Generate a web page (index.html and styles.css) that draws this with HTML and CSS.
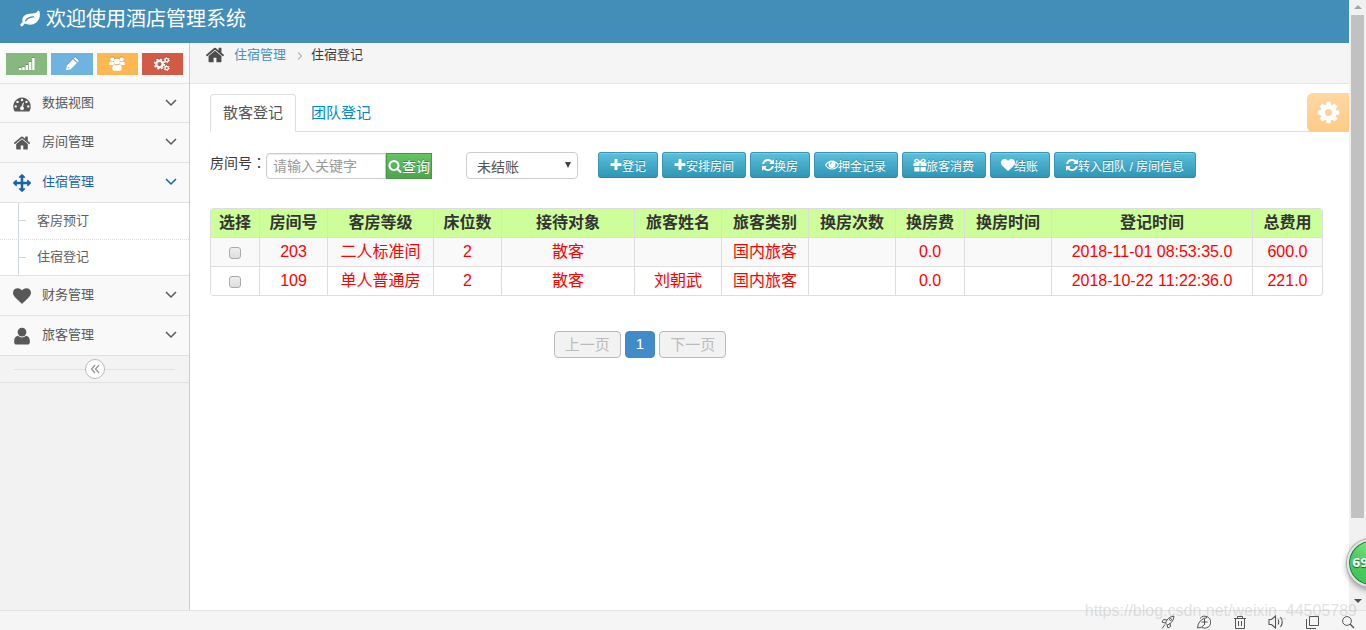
FILE: index.html
```html
<!DOCTYPE html>
<html lang="zh-CN">
<head>
<meta charset="utf-8">
<title>酒店管理系统</title>
<link rel="stylesheet" href="styles.css">
</head>
<body>
<svg class="sprite" aria-hidden="true">
  <symbol id="plus" viewBox="0 0 1792 1792"><path d="M1600 736v192q0 40-28 68t-68 28h-416v416q0 40-28 68t-68 28h-192q-40 0-68-28t-28-68v-416h-416q-40 0-68-28t-28-68v-192q0-40 28-68t68-28h416v-416q0-40 28-68t68-28h192q40 0 68 28t28 68v416h416q40 0 68 28t28 68z"/></symbol>
  <symbol id="search" viewBox="0 0 1792 1792"><path d="M1216 832q0-185-131.500-316.500t-316.500-131.500-316.500 131.500-131.500 316.500 131.500 316.500 316.500 131.500 316.500-131.500 131.500-316.500zm512 832q0 52-38 90t-90 38q-54 0-90-38l-343-342q-179 124-399 124-143 0-273.500-55.500t-225-150-150-225-55.500-273.500 55.500-273.500 150-225 225-150 273.500-55.500 273.500 55.500 225 150 150 225 55.500 273.500q0 220-124 399l343 343q37 37 37 90z"/></symbol>
  <symbol id="home" viewBox="0 0 1792 1792"><path d="M1472 992v480q0 26-19 45t-45 19h-384v-384h-256v384h-384q-26 0-45-19t-19-45v-480q0-1 .5-3t.5-3l575-474 575 474q1 2 1 6zm223-69l-62 74q-8 9-21 11h-3q-13 0-21-7l-692-577-692 577q-12 8-24 7-13-2-21-11l-62-74q-8-10-7-23.500t11-21.500l719-599q32-26 76-26t76 26l244 204v-195q0-14 9-23t23-9h192q14 0 23 9t9 23v408l219 182q10 8 11 21.500t-7 23.500z"/></symbol>
  <symbol id="heart" viewBox="0 0 1792 1792"><path d="M896 1664q-26 0-44-18l-624-602q-10-8-27.500-26t-55.500-65.500-68-97.500-53.500-121-23.500-138q0-220 127-344t351-124q62 0 126.500 21.500t120 58 95.500 68.500 76 68q36-36 76-68t95.500-68.500 120-58 126.500-21.500q224 0 351 124t127 344q0 221-229 450l-623 600q-18 18-44 18z"/></symbol>
  <symbol id="move" viewBox="0 0 1792 1792"><path d="M1792 896q0 26-19 45l-256 256q-19 19-45 19t-45-19-19-45v-128h-384v384h128q26 0 45 19t19 45-19 45l-256 256q-19 19-45 19t-45-19l-256-256q-19-19-19-45t19-45 45-19h128v-384h-384v128q0 26-19 45t-45 19-45-19l-256-256q-19-19-19-45t19-45l256-256q19-19 45-19t45 19 19 45v128h384v-384h-128q-26 0-45-19t-19-45 19-45l256-256q19-19 45-19t45 19l256 256q19 19 19 45t-19 45-45 19h-128v384h384v-128q0-26 19-45t45-19 45 19l256 256q19 19 19 45z"/></symbol>
  <symbol id="refresh" viewBox="0 0 1792 1792"><path d="M1639 1056q0 5-1 7-64 268-268 434.500t-478 166.500q-146 0-282.500-55t-243.500-157l-129 129q-19 19-45 19t-45-19-19-45v-448q0-26 19-45t45-19h448q26 0 45 19t19 45-19 45l-137 137q71 66 161 102t187 36q134 0 250-65t186-179q11-17 53-117 8-23 30-23h192q13 0 22.500 9.500t9.500 22.500zm25-800v448q0 26-19 45t-45 19h-448q-26 0-45-19t-19-45 19-45l138-138q-148-137-349-137-134 0-250 65t-186 179q-11 17-53 117-8 23-30 23h-199q-13 0-22.500-9.500t-9.500-22.500v-7q65-268 270-434.500t480-166.500q146 0 284 55.500t245 156.500l130-129q19-19 45-19t45 19 19 45z"/></symbol>
  <symbol id="cog" viewBox="0 0 1792 1792"><path d="M1152 896q0-106-75-181t-181-75-181 75-75 181 75 181 181 75 181-75 75-181zm512-109v222q0 12-8 23t-20 13l-185 28q-19 54-39 91 35 50 107 138 10 12 10 25t-9 23q-27 37-99 108t-94 71q-12 0-26-9l-138-108q-44 23-91 38-16 136-29 186-7 28-36 28h-222q-14 0-24.500-8.500t-11.500-21.500l-28-184q-49-16-90-37l-141 107q-10 9-25 9-14 0-25-11-126-114-165-168-7-10-7-23 0-12 8-23 15-21 51-66.500t54-70.500q-27-50-41-99l-183-27q-13-2-21-12.500t-8-23.500v-222q0-12 8-23t19-13l186-28q14-46 39-92-40-57-107-138-10-12-10-24 0-10 9-23 26-36 98.500-107.500t94.500-71.500q13 0 26 10l138 107q44-23 91-38 16-136 29-186 7-28 36-28h222q14 0 24.500 8.500t11.500 21.500l28 184q49 16 90 37l142-107q9-9 24-9 13 0 25 10 129 119 165 170 7 8 7 22 0 12-8 23-15 21-51 66.500t-54 70.500q26 50 41 98l183 28q13 2 21 12.500t8 23.500z"/></symbol>
  <symbol id="cogs" viewBox="0 0 16 14"><g fill="none" stroke="currentColor"><circle cx="5.500" cy="7" r="3.200" stroke-width="2.400"/><circle cx="5.500" cy="7" r="4.800" stroke-width="1.600" stroke-dasharray="2 1.770"/><circle cx="12.700" cy="3" r="1.700" stroke-width="1.300"/><circle cx="12.700" cy="3" r="2.600" stroke-width="1" stroke-dasharray="1.300 1.420"/><circle cx="12.700" cy="11" r="1.700" stroke-width="1.300"/><circle cx="12.700" cy="11" r="2.600" stroke-width="1" stroke-dasharray="1.300 1.420"/></g></symbol>
  <symbol id="signal" viewBox="0 0 16 14"><path d="M0 11h2.400v2H0zM3.300 10h2.400v3H3.300zM6.600 8H9v5H6.600zM9.900 5h2.400v8H9.900zM13.200 1h2.400v12h-2.400z"/></symbol>
  <symbol id="pencil" viewBox="0 0 14 14"><path fill-rule="evenodd" d="M1 13.200l.8-4.800L8 2.100l3.900 3.900-6.200 6.200zm1.700-1.700l1.500-.4-1.100-1.100zM8.700 1.400l.7-.7q.8-.7 1.600 0l2.300 2.300q.7.800 0 1.600l-.7.700z"/></symbol>
  <symbol id="group" viewBox="0 0 16 14"><circle cx="8" cy="4.500" r="3"/><circle cx="3.300" cy="2.300" r="2.100"/><circle cx="12.700" cy="2.300" r="2.100"/><path d="M.2 7.500Q0 4.200 1.600 4.200q1.700 1.100 3.100.2Q4.600 6 5.800 7 4.500 7 3.800 8H1.200q-.8 0-1-.5zM15.800 7.500q.2-3.300-1.400-3.300-1.700 1.100-3.100.2.100 1.600-1.100 2.600 1.300 0 2 1h2.600q.8 0 1-.5zM5.500 7.200q2.500 1.900 5 0 2.300.3 2.300 4.500 0 2.100-1.900 2.100H5.100q-1.900 0-1.900-2.100 0-4.200 2.300-4.500z"/></symbol>
  <symbol id="dashboard" viewBox="0 0 18 15"><path fill-rule="evenodd" d="M9 1a9 9 0 0 1 7.600 13.400q-.3.600-.9.600H2.300q-.6 0-.9-.6A9 9 0 0 1 9 1zM9 2.300a1.200 1.200 0 1 0 0 2.400 1.200 1.200 0 0 0 0-2.400zM4.500 4.200a1.200 1.200 0 1 0 0 2.400 1.200 1.200 0 0 0 0-2.400zm9 0a1.200 1.200 0 1 0 0 2.400 1.200 1.200 0 0 0 0-2.400zM2.700 8.700a1.200 1.200 0 1 0 0 2.400 1.200 1.200 0 0 0 0-2.400zm12.600 0a1.200 1.200 0 1 0 0 2.400 1.200 1.200 0 0 0 0-2.400zM10 6L8.600 9.700Q7 10 7 11.800 7.100 13.700 9 13.700t2-1.900q0-1.100-1-1.800L11 6.300z"/></symbol>
  <symbol id="user" viewBox="0 0 16 16"><circle cx="8" cy="4.500" r="3.900"/><path d="M4.300 7.800Q8 11 11.700 7.800 15 8.500 15 13q0 2.600-2.300 2.600H3.300Q1 15.600 1 13q0-4.500 3.300-5.200z"/></symbol>
  <symbol id="leaf" viewBox="0 0 20 17"><path fill-rule="evenodd" d="M18.600.6q.9 0 1.200 2.600.6 5.600-3.400 9.200-3.500 2.900-8.200 2.200-2-.6-3.400-1.100-1 1-2 2.600-.6.700-1.500.1-1.300-.9-1-1.700.4-.9 2.200-2.300Q1.300 6.400 7 4.300q2-.7 5.500-.9 3.600-.2 4.900-2 .6-.8 1.200-.8zM13.700 6.300Q8 6.200 5 10.500q-.3.800.4.900.5 0 .9-.5 3-3.300 7.400-3.300.7-.1.700-.7t-.7-.6z"/></symbol>
  <symbol id="eye" viewBox="0 0 14 12"><path fill-rule="evenodd" d="M7 1.500q4.400 0 7 4.500-2.600 4.500-7 4.500T0 6q2.600-4.500 7-4.500zM4.100 3.400Q2.200 4.400 1.200 6q2.200 3.400 5.800 3.400T12.800 6q-1-1.600-2.900-2.600.6.900.6 2a3.500 3.500 0 0 1-7 0q0-1.100.6-2zM7 3Q4.900 3.100 4.800 5.200q0 .4.400.4t.4-.4q0-1.300 1.400-1.400.4 0 .4-.4T7 3z"/></symbol>
  <symbol id="gift" viewBox="0 0 14 14"><path d="M.5 5h6v3h-6zM7.500 5h6v3h-6zM1.300 9h5.200v4.500H1.300zM7.500 9h5.200v4.500H7.500z"/><path d="M7 4.500Q5 .8 3.200 1.300 1.200 2 2.300 4q.4.600 4.700.5Q9 .8 10.800 1.300q2 .7.900 2.700-.4.600-4.700.5z" fill="none" stroke="currentColor" stroke-width="1.400"/></symbol>
  <symbol id="down" viewBox="0 0 12 8"><path d="M1 1l5 5 5-5" fill="none" stroke="currentColor" stroke-width="1.500"/></symbol>
  <symbol id="right" viewBox="0 0 6 8"><path d="M1 .5L4.500 4 1 7.500" fill="none" stroke="currentColor" stroke-width="1.200"/></symbol>
  <symbol id="double-left" viewBox="0 0 10 10"><path d="M5 1L1.500 5 5 9M9 1L5.500 5 9 9" fill="none" stroke="currentColor" stroke-width="1.300"/></symbol>
  <symbol id="tri-up" viewBox="0 0 8 4"><path d="M0 4l4-4 4 4z"/></symbol>
  <symbol id="tri-down" viewBox="0 0 8 4"><path d="M0 0l4 4 4-4z"/></symbol>
  <symbol id="caret" viewBox="0 0 6 6"><path d="M0 0h6L3 6z"/></symbol>
  <symbol id="rocket" viewBox="0 0 14 14"><g fill="none" stroke="currentColor"><path d="M4.500 8Q6.500 2 13 1q-.5 6.500-6.500 9zM6 5L2.500 4.500 1 7l3.500 1M9 8l.5 3.500L7 13l-1-3M4 9.500l-3 4"/><circle cx="9.500" cy="4.500" r="1"/></g></symbol>
  <symbol id="boost" viewBox="0 0 14 14"><path d="M3 3.500A6 6 0 1 1 5 12.500M.5 13Q1 4.500 10 2.500M.5 13q4.500 0 6.500-3M7.500 4v6M4.500 7h6" fill="none" stroke="currentColor"/></symbol>
  <symbol id="trash" viewBox="0 0 14 14"><path d="M1 3.500h12M4.500 3.500v-2h5v2M2.500 3.500v10h9v-10M5.500 6v5M8.500 6v5" fill="none" stroke="currentColor"/></symbol>
  <symbol id="sound" viewBox="0 0 16 14"><path d="M1 4.500h2.500L7.500 1v12l-4-3.500H1zM10 4.500q1.500 2.500 0 5M12.500 2q3.500 5 0 10" fill="none" stroke="currentColor" stroke-width="1.100"/></symbol>
  <symbol id="windows" viewBox="0 0 14 14"><path d="M4.500 1.500h9v9h-9zM1.500 4v9.500H11" fill="none" stroke="currentColor"/></symbol>
  <symbol id="zoom" viewBox="0 0 14 14"><path d="M9 9l4 4" fill="none" stroke="currentColor" stroke-width="1.400"/><circle cx="6" cy="6" r="4.400" fill="none" stroke="currentColor"/></symbol>
</svg>

<div class="window">
  <div class="page">
    <header class="topbar">
      <svg class="leaf"><use href="#leaf"/></svg>
      <h1 class="brand">欢迎使用酒店管理系统</h1>
    </header>
    <div class="body">
      <aside class="sidebar">
        <div class="shortcuts">
          <button class="shortcut green" aria-label="统计"><svg><use href="#signal"/></svg></button>
          <button class="shortcut blue" aria-label="编辑"><svg><use href="#pencil"/></svg></button>
          <button class="shortcut orange" aria-label="用户"><svg><use href="#group"/></svg></button>
          <button class="shortcut red" aria-label="设置"><svg><use href="#cogs"/></svg></button>
        </div>
        <nav class="menu">
          <a class="item" href="#"><svg class="icon"><use href="#dashboard"/></svg><span class="label">数据视图</span><svg class="chevron"><use href="#down"/></svg></a>
          <a class="item" href="#"><svg class="icon"><use href="#home"/></svg><span class="label">房间管理</span><svg class="chevron"><use href="#down"/></svg></a>
          <a class="item active" href="#"><svg class="icon"><use href="#move"/></svg><span class="label">住宿管理</span><svg class="chevron"><use href="#down"/></svg></a>
          <div class="submenu">
            <a class="subitem" href="#">客房预订</a>
            <a class="subitem" href="#">住宿登记</a>
          </div>
          <a class="item" href="#"><svg class="icon"><use href="#heart"/></svg><span class="label">财务管理</span><svg class="chevron"><use href="#down"/></svg></a>
          <a class="item" href="#"><svg class="icon"><use href="#user"/></svg><span class="label">旅客管理</span><svg class="chevron"><use href="#down"/></svg></a>
        </nav>
        <div class="collapse"><button class="collapse-button" aria-label="收起菜单"><svg><use href="#double-left"/></svg></button></div>
      </aside>

      <main class="main">
        <nav class="breadcrumb">
          <svg class="crumb-home"><use href="#home"/></svg>
          <a class="crumb-link" href="#">住宿管理</a>
          <svg class="crumb-arrow"><use href="#right"/></svg>
          <span>住宿登记</span>
        </nav>
        <button class="settings" aria-label="设置"><svg><use href="#cog"/></svg></button>
        <div class="content">
          <div class="tabs">
            <a class="tab current" href="#">散客登记</a>
            <a class="tab" href="#">团队登记</a>
          </div>
          <div class="toolbar">
            <div class="search">
              <label class="search-label" for="room">房间号<span class="colon" lang="zh-TW">：</span></label>
              <input class="search-input" id="room" type="text" placeholder="请输入关键字">
              <button class="search-button"><svg><use href="#search"/></svg>查询</button>
            </div>
            <div class="picker">
              <select class="status" aria-label="结账状态"><option>未结账</option><option>已结账</option></select>
              <svg class="caret"><use href="#caret"/></svg>
            </div>
            <div class="actions">
              <button class="action"><svg><use href="#plus"/></svg>登记</button>
              <button class="action"><svg><use href="#plus"/></svg>安排房间</button>
              <button class="action"><svg><use href="#refresh"/></svg>换房</button>
              <button class="action"><svg><use href="#eye"/></svg>押金记录</button>
              <button class="action"><svg><use href="#gift"/></svg>旅客消费</button>
              <button class="action"><svg><use href="#heart"/></svg>结账</button>
              <button class="action"><svg><use href="#refresh"/></svg>转入团队 / 房间信息</button>
            </div>
          </div>
          <table class="records">
            <colgroup><col class="w-check"><col class="w-short"><col class="w-grade"><col class="w-short"><col class="w-guest"><col class="w-mid"><col class="w-mid"><col class="w-mid"><col class="w-fee"><col class="w-mid"><col class="w-time"><col class="w-total"></colgroup>
            <thead>
              <tr><th>选择</th><th>房间号</th><th>客房等级</th><th>床位数</th><th>接待对象</th><th>旅客姓名</th><th>旅客类别</th><th>换房次数</th><th>换房费</th><th>换房时间</th><th>登记时间</th><th>总费用</th></tr>
            </thead>
            <tbody>
              <tr><td><input class="check" type="checkbox" aria-label="选择 203"></td><td>203</td><td>二人标准间</td><td>2</td><td>散客</td><td></td><td>国内旅客</td><td></td><td>0.0</td><td></td><td>2018-11-01 08:53:35.0</td><td>600.0</td></tr>
              <tr><td><input class="check" type="checkbox" aria-label="选择 109"></td><td>109</td><td>单人普通房</td><td>2</td><td>散客</td><td>刘朝武</td><td>国内旅客</td><td></td><td>0.0</td><td></td><td>2018-10-22 11:22:36.0</td><td>221.0</td></tr>
            </tbody>
          </table>
          <div class="pager">
            <button class="page-button" disabled>上一页</button>
            <button class="page-button on">1</button>
            <button class="page-button" disabled>下一页</button>
          </div>
        </div>
      </main>
    </div>
  </div>
  <div class="scrollbar">
    <svg class="up"><use href="#tri-up"/></svg>
    <div class="track"><div class="thumb"></div></div>
    <svg class="down"><use href="#tri-down"/></svg>
  </div>
</div>
<footer class="statusbar">
  <svg><use href="#rocket"/></svg>
  <svg><use href="#boost"/></svg>
  <svg><use href="#trash"/></svg>
  <svg class="wide"><use href="#sound"/></svg>
  <svg><use href="#windows"/></svg>
  <svg><use href="#zoom"/></svg>
</footer>
<div class="meter">69</div>
<div class="watermark">https://blog.csdn.net/weixin_44505789</div>
</body>
</html>
```
FILE: styles.css
```css
* { box-sizing: border-box; }
body {
  position: relative;
  display: flex;
  flex-direction: column;
  height: 100vh;
  margin: 0;
  overflow: hidden;
  background: #fff;
  color: #393939;
  font: 13px/20px "Liberation Sans", "Noto Sans CJK SC", sans-serif;
}
a { color: inherit; text-decoration: none; }
button, input, select { margin: 0; font-family: inherit; }
svg { display: block; flex: none; fill: currentColor; }
.sprite { position: absolute; width: 0; height: 0; }

.window { display: flex; flex: 1; min-height: 0; }
.page { display: flex; flex: 1; flex-direction: column; min-width: 0; }
.body { display: flex; flex: 1; min-height: 0; }

.topbar {
  display: flex;
  align-items: center;
  gap: 6px;
  height: 43px;
  padding: 0 20px 6px;
  background: #438eb9;
  color: #fff;
}
.leaf { width: 20px; height: 17px; }
.brand { margin: 0; font-size: 20px; font-weight: 400; line-height: 24px; }

.sidebar {
  width: 190px;
  flex: none;
  border-right: 1px solid #ccc;
  background: #f2f2f2;
  color: #585858;
}
.shortcuts {
  display: flex;
  gap: 4px;
  height: 40px;
  padding: 10px 6px 8px;
  background: #fafafa;
}
.shortcut {
  display: flex;
  flex: 1;
  align-items: center;
  justify-content: center;
  padding: 0;
  border: 0;
  color: #fff;
}
.shortcut svg { width: 16px; height: 14px; filter: drop-shadow(0 -1px 0 rgba(0, 0, 0, .2)); }
.green { background: #87b87f; }
.blue { background: #6fb3e0; }
.orange { background: #ffb752; }
.red { background: #d15b47; }

.item {
  display: flex;
  align-items: center;
  height: 40px;
  padding: 0 12px 1px 13px;
  border-top: 1px solid #e2e2e2;
  background: #f9f9f9;
}
.item:first-child { height: 39px; }
.icon { width: 18px; height: 18px; margin-top: 2px; }
.label { flex: 1; padding-left: 11px; }
.chevron { width: 12px; height: 8px; }
.active { color: #1963aa; }
.submenu {
  position: relative;
  border-top: 1px solid #e2e2e2;
  background: #fff;
}
.submenu::before {
  content: "";
  position: absolute;
  inset: 0 auto 0 18px;
  border-left: 1px solid #ccd7e2;
}
.subitem {
  position: relative;
  display: block;
  height: 36px;
  padding: 8px 0 8px 37px;
  color: #616161;
}
.subitem::before {
  content: "";
  position: absolute;
  top: 17px;
  left: 18px;
  width: 8px;
  border-top: 1px solid #ccd7e2;
}
.subitem + .subitem { padding-top: 7px; border-top: 1px dotted #ddd; }
.collapse {
  display: flex;
  align-items: center;
  height: 28px;
  padding: 0 14px;
  border: solid #e0e0e0;
  border-width: 1px 0;
  background: #f3f3f3;
}
.collapse::before, .collapse::after { content: ""; flex: 1; border-top: 1px solid #e0e0e0; }
.collapse-button {
  display: flex;
  align-items: center;
  justify-content: center;
  width: 20px;
  height: 20px;
  padding: 0;
  border: 1px solid #bbb;
  border-radius: 50%;
  background: #fff;
  color: #999;
}
.collapse-button svg { width: 10px; height: 10px; }

.main { position: relative; flex: 1; min-width: 0; }
.breadcrumb {
  display: flex;
  align-items: center;
  height: 41px;
  padding: 0 15px 16px;
  border-bottom: 1px solid #e5e5e5;
  background: #f5f5f5;
}
.crumb-home { width: 20px; height: 20px; margin-right: 9px; color: #4c4c4c; }
.crumb-link { color: #4c8fbd; }
.crumb-arrow { width: 6px; height: 8px; margin: 2px 8px 0 11px; color: #b2b6bf; }
.settings {
  position: absolute;
  top: 50px;
  right: 0;
  display: flex;
  align-items: center;
  justify-content: center;
  width: 42px;
  height: 39px;
  padding: 0;
  border: 0;
  border-radius: 6px 0 0 6px;
  background: linear-gradient(#ffd7a3, #ffcb86);
  color: #fff;
}
.settings svg { width: 25px; height: 25px; }

.content { padding: 10px 26px 0 20px; }
.tabs { display: flex; gap: 2px; border-bottom: 1px solid #ddd; }
.tab {
  margin-bottom: -1px;
  padding: 8px 12px;
  border: 1px solid transparent;
  border-radius: 4px 4px 0 0;
  color: #0088cc;
  font-size: 15px;
}
.current { border-color: #ddd #ddd #fff; background: #fff; color: #555; }

.toolbar { display: flex; align-items: flex-start; margin-top: 20px; }
.search { display: flex; align-items: center; }
.search-label { padding-bottom: 6px; font-size: 14px; }
.colon { font-family: "Noto Sans CJK TC", sans-serif; }
.search-input {
  width: 120px;
  height: 26px;
  padding: 0 6px;
  border: 1px solid #ccc;
  border-radius: 4px 0 0 4px;
  box-shadow: inset 0 1px 1px rgba(0, 0, 0, .08);
  font-size: 14px;
}
.search-input::placeholder { color: #999; }
.search-button {
  display: flex;
  align-items: center;
  height: 26px;
  padding: 0 1px;
  border: 1px solid #459745;
  background: linear-gradient(#62c462, #51a351);
  color: #fff;
  font-size: 14px;
  text-shadow: 0 -1px 0 rgba(0, 0, 0, .25);
}
.search-button svg { width: 14px; height: 14px; }
.picker { position: relative; margin: 0 20px 0 34px; }
.status {
  display: block;
  width: 112px;
  height: 27px;
  padding: 3px 10px 0;
  border: 1px solid #ccc;
  border-radius: 4px;
  background: #fff;
  color: #555;
  font-size: 14px;
  appearance: none;
}
.caret { position: absolute; top: 10px; right: 7px; width: 6px; height: 6px; color: #444; pointer-events: none; }
.actions { display: flex; gap: 4px; }
.action {
  display: flex;
  align-items: center;
  height: 26px;
  padding: 0 11px;
  border: 1px solid #3a94b1;
  border-bottom-color: #2a85a0;
  border-radius: 3px;
  background: linear-gradient(#5bc0de, #2f96b4);
  box-shadow: inset 0 1px 0 rgba(255, 255, 255, .2);
  color: #fff;
  font-size: 12px;
  white-space: nowrap;
  text-shadow: 0 -1px 0 rgba(0, 0, 0, .25);
}
.action svg { width: 14px; height: 14px; margin: 0 -1px; }

.records {
  width: 100%;
  margin-top: 29px;
  border: 1px solid #ddd;
  border-left: 0;
  border-radius: 4px;
  border-spacing: 0;
  table-layout: fixed;
  overflow: hidden;
  font-size: 16px;
  text-align: center;
}
.w-check { width: 49px; }
.w-short { width: 68px; }
.w-fee { width: 69px; }
.w-grade { width: 106px; }
.w-guest { width: 133px; }
.w-mid { width: 87px; }
.w-time { width: 201px; }
.w-total { width: 70px; }
.records th, .records td {
  height: 29px;
  padding: 0;
  border-left: 1px solid #ddd;
  white-space: nowrap;
}
.records th { height: 28px; background: #cf9; color: #333; }
.records td { border-top: 1px solid #ddd; color: #f00; }
.records tbody tr:first-child { background: #f9f9f9; }
.check {
  display: block;
  width: 12px;
  height: 12px;
  margin: 2px auto 0;
  border: 1px solid #aaa;
  border-radius: 3px;
  background: linear-gradient(#eee, #ddd);
  appearance: none;
}

.pager { display: flex; justify-content: center; gap: 4px; margin: 35px 253px 0 0; }
.page-button {
  height: 27px;
  padding: 0 10px 2px;
  border: 1px solid #bbb;
  border-radius: 4px;
  background: #f2f2f2;
  color: #bbb;
  font-size: 15px;
}
.on { border-color: #428bca; background: #428bca; color: #fff; }

.scrollbar {
  display: flex;
  flex: none;
  flex-direction: column;
  align-items: center;
  justify-content: space-between;
  width: 17px;
  padding: 5px 0 7px;
  background: #f1f1f1;
}
.up, .down { width: 8px; height: 4px; color: #a3a3a3; }
.down { color: #505050; }
.track { flex: 1; width: 13px; margin: 6px 0; }
.thumb { height: 87%; background: #c1c1c1; }

.statusbar {
  display: flex;
  justify-content: flex-end;
  gap: 22px;
  height: 20px;
  padding: 4px 11px 0;
  border-top: 1px solid #e2e2e2;
  background: #f5f5f5;
  color: #555;
}
.statusbar svg { width: 14px; height: 14px; }
.statusbar .wide { width: 16px; margin: 0 -1px; }
.meter {
  position: absolute;
  top: 539px;
  right: -29px;
  width: 48px;
  height: 48px;
  padding-left: 3px;
  border: 2px solid #e4e4e4;
  border-radius: 50%;
  background: radial-gradient(circle at 50% 0, #8ce68c, #4fcb60 45%, #3cc458);
  box-shadow: inset 0 0 0 1px #15803c, 0 0 0 1px #aaa, 0 3px 6px rgba(0, 0, 0, .4);
  color: #fff;
  font: bold 12px/44px "DejaVu Sans", sans-serif;
  text-shadow: 0 1px 1px #185c2a;
}
.watermark {
  position: absolute;
  right: 9px;
  bottom: 9px;
  color: rgba(170, 170, 170, .35);
  font-size: 16px;
  pointer-events: none;
}
```
